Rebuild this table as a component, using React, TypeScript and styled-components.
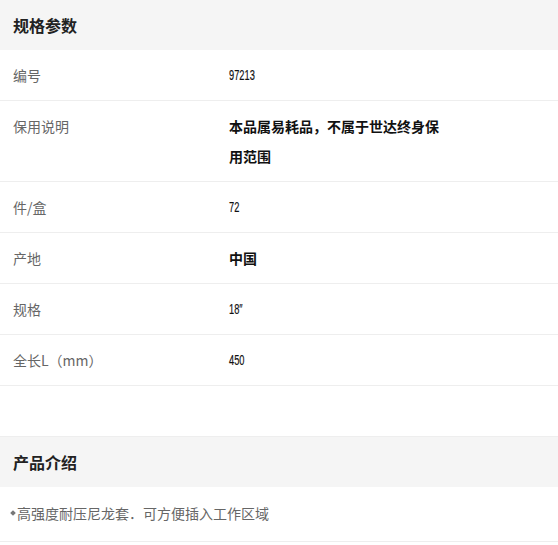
import React from "react";
import styled, { createGlobalStyle } from "styled-components";

const Global = createGlobalStyle`
  html, body { margin: 0; padding: 0; background: #fff; }
  body { font-family: "Noto Sans CJK SC", "Liberation Sans", sans-serif; }
`;

const Page = styled.div`
  width: 558px;
  display: flex;
  flex-direction: column;
`;

const SectionHeader = styled.div<{ $top?: boolean }>`
  height: 50px;
  background: #f5f5f5;
  border-top: ${(p) => (p.$top ? "1px solid #eeeeee" : "none")};
  display: flex;
  align-items: center;
  padding-left: 13px;
  font-size: 16px;
  font-weight: 700;
  color: #222;
`;

const Row = styled.div`
  display: grid;
  grid-template-columns: 216px 218px;
  align-items: start;
  padding: 10px 0 10px 13px;
  border-bottom: 1px solid #eeeeee;
  line-height: 30px;
  font-size: 14px;
`;

const Label = styled.div`
  color: #666;
`;

const Value = styled.div<{ $bold?: boolean }>`
  color: #111;
  font-weight: ${(p) => (p.$bold ? 700 : 400)};
`;

const Num = styled.div`
  height: 30px;
  line-height: 30px;
  font-family: "Liberation Sans", sans-serif;
  font-size: 15px;
  color: #111;
  -webkit-text-stroke: 0.2px #111;
  transform: scaleX(0.62);
  transform-origin: left center;
`;

const Spacer = styled.div`
  height: 50px;
`;

const Intro = styled.div`
  display: flex;
  align-items: center;
  padding: 11px 0 13px 10px;
  line-height: 30px;
  font-size: 14px;
  color: #666;
  border-bottom: 1px solid #eeeeee;
`;

const Diamond = styled.span`
  display: inline-block;
  width: 4px;
  height: 4px;
  background: #777;
  transform: rotate(45deg);
  margin: 0 2px 0 1px;
`;

type Spec = { label: string; value: string; num?: boolean };

const specs: Spec[] = [
  { label: "编号", value: "97213", num: true },
  { label: "保用说明", value: "本品属易耗品，不属于世达终身保用范围" },
  { label: "件/盒", value: "72", num: true },
  { label: "产地", value: "中国" },
  { label: "规格", value: "18″", num: true },
  { label: "全长L（mm）", value: "450", num: true },
];

export default function App() {
  return (
    <Page>
      <Global />
      <SectionHeader>规格参数</SectionHeader>
      {specs.map((s) => (
        <Row key={s.label}>
          <Label>{s.label}</Label>
          {s.num ? (
            <Value>
              <Num>{s.value}</Num>
            </Value>
          ) : (
            <Value $bold>{s.value}</Value>
          )}
        </Row>
      ))}
      <Spacer />
      <SectionHeader $top>产品介绍</SectionHeader>
      <Intro>
        <Diamond />
        高强度耐压尼龙套．可方便插入工作区域
      </Intro>
    </Page>
  );
}
